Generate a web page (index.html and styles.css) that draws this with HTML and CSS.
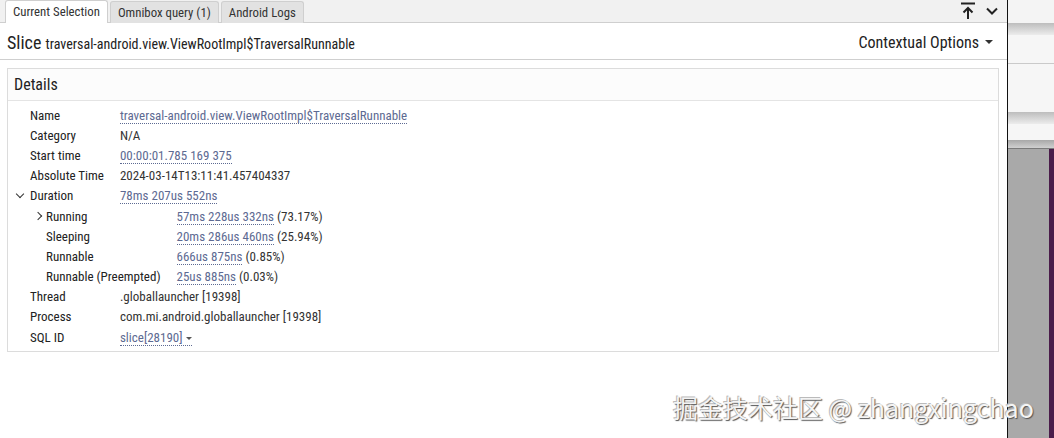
FILE: index.html
```html
<!DOCTYPE html>
<html lang="en">

<head>
  <meta charset="UTF-8">
  <title>Current Selection</title>
  <link rel="stylesheet" href="styles.css">
</head>

<body>
  <div class="page">
    <div class="panel">
      <div class="tabbar">
        <div class="tabs">
          <div class="tab active">Current Selection</div>
          <div class="tab">Omnibox query (1)</div>
          <div class="tab">Android Logs</div>
        </div>
        <div class="tab-tools">
          <svg width="16" height="18" viewBox="0 0 16 18">
            <path d="M1 1.5h14" stroke="#222" stroke-width="2" fill="none" />
            <path d="M8 17V6M3.5 10.5L8 6l4.5 4.5" stroke="#222" stroke-width="2" fill="none" />
          </svg>
          <svg width="14" height="10" viewBox="0 0 14 10">
            <path d="M2 2.5l5 5 5-5" stroke="#222" stroke-width="2" fill="none" />
          </svg>
        </div>
      </div>

      <div class="header">
        <div class="title"><span class="kind">Slice</span> traversal-android.view.ViewRootImpl$TraversalRunnable</div>
        <div class="ctx">Contextual Options <span class="caret"></span></div>
      </div>

      <div class="details">
        <div class="details-head">Details</div>
        <table class="tree">
          <tr>
            <td class="key">Name</td>
            <td><span class="link">traversal-android.view.ViewRootImpl$TraversalRunnable</span></td>
          </tr>
          <tr>
            <td class="key">Category</td>
            <td>N/A</td>
          </tr>
          <tr>
            <td class="key">Start time</td>
            <td><span class="link">00:00:01.785 169 375</span></td>
          </tr>
          <tr>
            <td class="key">Absolute Time</td>
            <td>2024-03-14T13:11:41.457404337</td>
          </tr>
          <tr>
            <td class="key"><span class="chev down"></span>Duration</td>
            <td><span class="link">78ms 207us 552ns</span></td>
          </tr>
          <tr>
            <td colspan="2" class="nest">
              <table class="tree sub">
                <tr>
                  <td class="key"><span class="chev right"></span>Running</td>
                  <td><span class="link">57ms 228us 332ns</span> (73.17%)</td>
                </tr>
                <tr>
                  <td class="key">Sleeping</td>
                  <td><span class="link">20ms 286us 460ns</span> (25.94%)</td>
                </tr>
                <tr>
                  <td class="key">Runnable</td>
                  <td><span class="link">666us 875ns</span> (0.85%)</td>
                </tr>
                <tr>
                  <td class="key">Runnable (Preempted)</td>
                  <td><span class="link">25us 885ns</span> (0.03%)</td>
                </tr>
              </table>
            </td>
          </tr>
          <tr>
            <td class="key">Thread</td>
            <td>.globallauncher [19398]</td>
          </tr>
          <tr>
            <td class="key">Process</td>
            <td>com.mi.android.globallauncher [19398]</td>
          </tr>
          <tr>
            <td class="key">SQL ID</td>
            <td><span class="link">slice[28190] <span class="caret small"></span></span></td>
          </tr>
        </table>
      </div>

      <div class="watermark">掘金技术社区 @ zhangxingchao</div>
    </div>

    <div class="side">
      <div class="side-top"></div>
      <div class="side-bar"></div>
      <div class="side-row"></div>
      <div class="side-row second"></div>
      <div class="side-bar"></div>
      <div class="side-gap"></div>
      <div class="side-bar dark"></div>
      <div class="side-track"></div>
    </div>
  </div>
</body>

</html>
```

FILE: styles.css
```css
html,
body {
  margin: 0;
  height: 100%;
  overflow: hidden;
}

body {
  font-family: Roboto, "Noto Sans", sans-serif;
  color: #333;
  background: #fff;
}

.page {
  display: flex;
  height: 438px;
}

.panel {
  position: relative;
  width: 1007px;
  flex: none;
  border-right: 1px solid #111;
  background: #fff;
}

.tabbar {
  display: flex;
  justify-content: space-between;
  align-items: flex-end;
  height: 23px;
  background: #f1f1f1;
  border-bottom: 1px solid #cfcfcf;
  box-sizing: border-box;
}

.tabs {
  display: flex;
  gap: 2px;
  padding-left: 5px;
  align-self: stretch;
  align-items: flex-end;
}

.tab {
  font-size: 12.8px;
  font-stretch: condensed;
  color: #333;
  padding: 0 7px;
  height: 21px;
  line-height: 22px;
  background: #e2e2e2;
  border: 1px solid #cfcfcf;
  border-bottom: none;
  border-radius: 3px 3px 0 0;
  margin-bottom: -1px;
}

.tab.active {
  background: #fff;
  height: 22px;
}

.tab-tools {
  display: flex;
  align-items: center;
  gap: 9px;
  padding-right: 8px;
  align-self: center;
}

.header {
  display: flex;
  justify-content: space-between;
  align-items: center;
  height: 34px;
  padding: 2px 14px 0 7px;
  border-bottom: 1px solid #cfcfcf;
}

.title {
  font-size: 14px;
  font-stretch: condensed;
  color: #222;
}

.title .kind {
  font-size: 18px;
  margin-right: 1px;
}

.ctx {
  font-size: 16px;
  font-stretch: condensed;
  color: #222;
  display: flex;
  align-items: center;
  gap: 6px;
}

.caret {
  display: inline-block;
  width: 0;
  height: 0;
  border-left: 4px solid transparent;
  border-right: 4px solid transparent;
  border-top: 4px solid #333;
}

.caret.small {
  border-width: 3px 3px 0;
  border-top-color: #555;
  vertical-align: 2px;
}

.details {
  margin: 8px 8px 0 7px;
  border: 1px solid #dcdcdc;
  padding-bottom: 4px;
}

.details-head {
  font-size: 16px;
  font-stretch: condensed;
  color: #222;
  height: 31px;
  line-height: 31px;
  padding-left: 6px;
  background: #fcfcfc;
  border-bottom: 1px solid #e4e4e4;
}

.tree {
  border-collapse: collapse;
  font-size: 13px;
  font-stretch: condensed;
  margin: 4px 0 0 22px;
}

.tree td {
  padding: 0;
  height: 20.2px;
  vertical-align: middle;
  white-space: nowrap;
}

.tree .key {
  position: relative;
  color: #222;
  padding-right: 16px;
}

.tree td.nest {
  padding: 0;
}

.tree.sub {
  margin: 0 0 0 16px;
}

.link {
  color: #5d6a92;
  border-bottom: 1px dotted #5d6a92;
}

.chev {
  position: absolute;
  left: -13px;
  top: 6px;
  width: 5px;
  height: 5px;
  border-right: 1.3px solid #333;
  border-bottom: 1.3px solid #333;
}

.chev.down {
  transform: rotate(45deg);
  top: 5px;
}

.chev.right {
  transform: rotate(-45deg);
  left: -11px;
  top: 7px;
}

.watermark {
  position: absolute;
  left: 673px;
  top: 389px;
  font-family: "Noto Sans CJK SC", "Noto Sans", sans-serif;
  font-size: 25px;
  color: #f4f4f4;
  text-shadow: 1px 1px 1px #555, -1px -1px 0 #bbb;
  white-space: nowrap;
  z-index: 2;
}

.side {
  flex: 1;
  display: flex;
  flex-direction: column;
  background: #f6f6f6;
}

.side-top {
  height: 23px;
  background: #f4f4f4;
}

.side-bar {
  height: 12px;
  background: linear-gradient(#bdbdbd, #ececec);
}

.side-bar.dark {
  height: 8px;
  background: linear-gradient(#a8a8a8, #d0d0d0);
}

.side-row {
  height: 28px;
  border-bottom: 1px solid #cacaca;
}

.side-row.second {
  height: 48px;
  border-bottom: none;
}

.side-gap {
  height: 16px;
}

.side-track {
  flex: 1;
  background: linear-gradient(to right, #a9a9a9 41px, #4a1c4a 41px);
  border-top: 1px solid #7a7a7a;
}
```
